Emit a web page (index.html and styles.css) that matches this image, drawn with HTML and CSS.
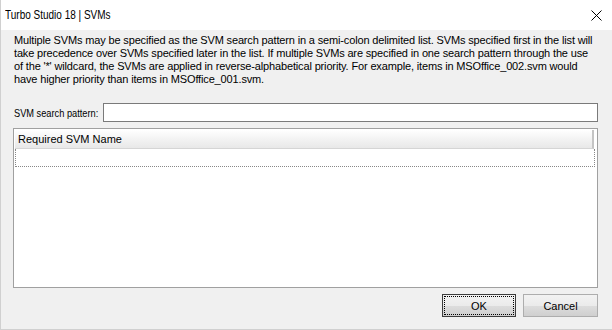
FILE: index.html
```html
<!DOCTYPE html>
<html>
<head>
<meta charset="utf-8">
<link rel="stylesheet" href="styles.css">
</head>
<body>
<div class="window">
  <div class="titlebar">
    <span class="title">Turbo Studio 18 | SVMs</span>
    <svg class="close" width="11" height="11" viewBox="0 0 11 11"><path d="M0.5 0.5 L10.5 10.5 M10.5 0.5 L0.5 10.5" stroke="#000" stroke-width="1" fill="none"/></svg>
  </div>
  <div class="body">
    <p class="desc">Multiple SVMs may be specified as the SVM search pattern in a semi-colon delimited list. SVMs specified first in the list will<br>take precedence over SVMs specified later in the list. If multiple SVMs are specified in one search pattern through the use<br>of the '*' wildcard, the SVMs are applied in reverse-alphabetical priority. For example, items in MSOffice_002.svm would<br>have higher priority than items in MSOffice_001.svm.</p>
    <div class="field">
      <div class="label-box"><label class="label">SVM search pattern:</label></div>
      <div class="input"></div>
    </div>
    <div class="list">
      <div class="header"><span>Required SVM Name</span></div>
      <div class="row"></div>
    </div>
    <div class="buttons">
      <div class="btn default"><span class="focus">OK</span></div>
      <div class="btn">Cancel</div>
    </div>
  </div>
</div>
</body>
</html>
```
FILE: styles.css
```css
html, body {
  margin: 0;
  padding: 0;
  background: #f0f0f0;
}
.window {
  width: 612px;
  height: 330px;
  box-sizing: border-box;
  border-left: 1px solid #d0d0d0;
  border-bottom: 1px solid #d0d0d0;
  background: #f0f0f0;
  font-family: "Liberation Sans", Arial, sans-serif;
  font-size: 11px;
  color: #000;
  display: flex;
  flex-direction: column;
}
.titlebar {
  height: 30px;
  background: #fff;
  display: flex;
  align-items: center;
  justify-content: space-between;
  padding: 0 10px 0 4px;
  flex: none;
}
.title {
  display: inline-block;
  font-family: "Liberation Sans", Arial, sans-serif;
  font-size: 12.5px;
  color: #000;
  transform: scaleX(0.8);
  transform-origin: left center;
  white-space: nowrap;
}
.close {
  display: block;
}
.body {
  padding: 0 14px 0 12px;
  display: flex;
  flex-direction: column;
  flex: 1;
}
.desc {
  margin: 4px 0 0 1px;
  line-height: 13px;
  white-space: nowrap;
  letter-spacing: -0.15px;
}
.field {
  display: flex;
  align-items: center;
  margin-top: 17px;
  height: 19px;
}
.label-box {
  width: 90px;
  padding-left: 1px;
  box-sizing: border-box;
  flex: none;
}
.label {
  display: inline-block;
  white-space: nowrap;
  transform: scaleX(0.84);
  transform-origin: left center;
}
.input {
  flex: 1;
  height: 19px;
  box-sizing: border-box;
  border: 1px solid #7a7a7a;
  background: #fff;
}
.list {
  margin-top: 6px;
  height: 160px;
  box-sizing: border-box;
  border: 1px solid #a0a0a0;
  background: #fff;
  padding: 1px 1px 0 1px;
}
.header {
  height: 19px;
  box-sizing: border-box;
  display: flex;
  align-items: center;
  background: linear-gradient(#ffffff, #f3f3f3 50%, #e8e8e8);
  border-bottom: 1px solid #d5d5d5;
  border-right: 2px solid #c4c4c4;
  margin-right: 2px;
  padding-left: 3px;
}
.row {
  height: 18px;
  box-sizing: border-box;
  border: 1px dotted #888;
  border-top: none;
  margin-right: 1px;
}
.buttons {
  display: flex;
  justify-content: flex-end;
  gap: 7px;
  margin-top: 6px;
}
.btn {
  width: 75px;
  height: 23px;
  box-sizing: border-box;
  border: 1px solid #adadad;
  background: linear-gradient(#f2f2f2, #ebebeb 50%, #dddddd 51%, #cfcfcf);
  display: flex;
  align-items: center;
  justify-content: center;
}
.btn.default {
  width: 74px;
  border: 1px solid #3c3c3c;
  padding: 1px;
}
.btn.default .focus {
  width: 100%;
  height: 100%;
  box-sizing: border-box;
  border: 1px dotted #000;
  display: flex;
  align-items: center;
  justify-content: center;
}
```
